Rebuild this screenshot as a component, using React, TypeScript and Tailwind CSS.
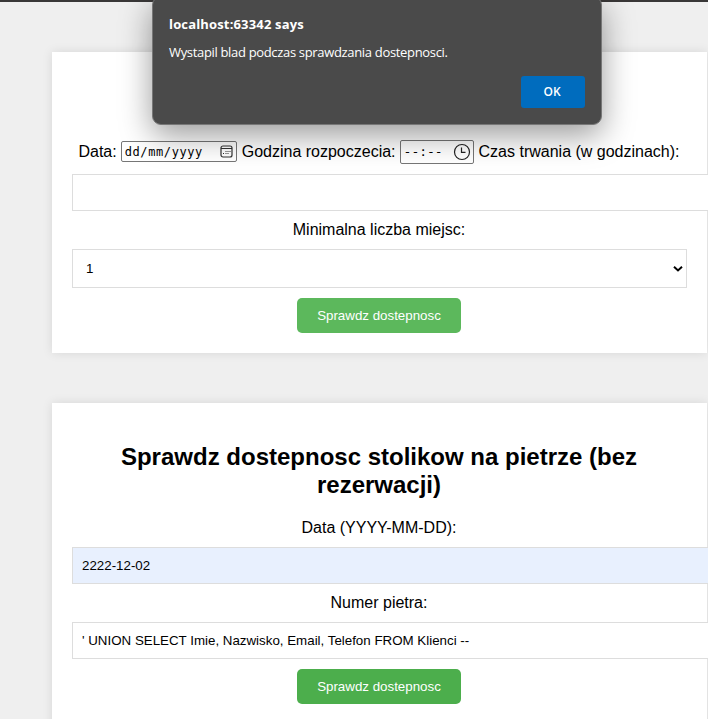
import React from "react";

function Panel({ className = "", children }: { className?: string; children: React.ReactNode }) {
  return (
    <section
      className={`flex w-[655px] shrink-0 flex-col items-center bg-white px-5 shadow-[0_0_10px_rgba(0,0,0,0.1)] ${className}`}
    >
      {children}
    </section>
  );
}

function Label({ children }: { children: React.ReactNode }) {
  return <label className="mr-px flex h-[38px] items-center text-[16px] leading-[18px]">{children}</label>;
}

function Field({ value, filled = false }: { value: string; filled?: boolean }) {
  return (
    <div
      className={`flex h-[37px] w-[637px] shrink-0 items-center self-start whitespace-pre border border-[#dddddd] px-[9px] text-[13.333px] leading-[15px] ${filled ? "bg-[#e8f0fe]" : "bg-white"}`}
    >
      {value}
    </div>
  );
}

function CheckButton({ className }: { className: string }) {
  return (
    <button
      className={`mr-px mt-[10px] h-[35px] w-[164px] rounded-[5px] text-[13.333px] leading-[15px] text-white ${className}`}
    >
      Sprawdz dostepnosc
    </button>
  );
}

function CalendarIcon() {
  return (
    <svg width="13" height="13" viewBox="0 0 13 13" fill="none" stroke="#333">
      <rect x="1" y="1" width="11" height="11" rx="2" strokeWidth="1.2" />
      <path d="M1 3.5h11" />
      <path d="M5.5 6.5h1M7.5 6.5h1M9.5 6.5h1M3 8.5h1M5.5 8.5h1M7.5 8.5h1" />
    </svg>
  );
}

function ClockIcon() {
  return (
    <svg width="18" height="18" viewBox="0 0 18 18" fill="none" stroke="#222" strokeWidth="1.2">
      <circle cx="9" cy="9" r="7.5" />
      <path d="M8.5 4.5v4.9h4" />
    </svg>
  );
}

function AlertDialog() {
  return (
    <div
      role="alertdialog"
      className="absolute left-[152px] top-[-4px] flex h-[129px] w-[450px] flex-col rounded-[9px] border border-[#777777] bg-[#4a4a4a] px-4 text-white shadow-[0_10px_32px_rgba(0,0,0,0.4)]"
      style={{ fontFamily: '"Open Sans", "Noto Sans", sans-serif' }}
    >
      <h1 className="mt-[18px] text-[13px] font-bold leading-[18px] tracking-[0.16px]">localhost:63342 says</h1>
      <p className="mt-[10px] text-[13px] leading-[18px] tracking-[-0.33px]">
        Wystapil blad podczas sprawdzania dostepnosci.
      </p>
      <button className="mt-[15px] h-8 w-16 self-end rounded-[3px] bg-[#006cbe] pr-[2px] text-[12px] font-semibold leading-[16px]">
        OK
      </button>
    </div>
  );
}

export default function App() {
  return (
    <main
      className="relative flex h-[719px] w-[708px] flex-col overflow-hidden bg-[#efefef] text-black"
      style={{ fontFamily: '"Liberation Sans", Arial, sans-serif' }}
    >
      <div className="h-[2px] shrink-0 bg-[#393737]" />
      <div className="flex flex-col gap-[50px] pl-[52px] pt-[50px]">
        <Panel className="h-[301px]">
          <div className="mr-px mt-[87px] flex h-[25px] items-center whitespace-nowrap text-[16px] leading-[18px]">
            <span>Data:</span>
            <span
              className="ml-[4px] flex h-[21px] w-[116px] items-center justify-between rounded-[2px] border border-[#767676] bg-white pl-[3px] pr-[3px] text-[12px] leading-[15px]"
              style={{ fontFamily: '"DejaVu Sans Mono", monospace' }}
            >
              <span className="pt-px tracking-[0.6px]">dd/mm/yyyy</span>
              <CalendarIcon />
            </span>
            <span className="ml-[5px]">Godzina rozpoczecia:</span>
            <span
              className="ml-[4px] flex h-[24px] w-[74px] items-center justify-between rounded-[2px] border border-[#767676] bg-white pl-[3px] pr-[2px] text-[13px] leading-[15px]"
              style={{ fontFamily: '"DejaVu Sans Mono", monospace' }}
            >
              --:--
              <ClockIcon />
            </span>
            <span className="ml-[5px]">Czas trwania (w godzinach):</span>
          </div>
          <div className="h-[10px] shrink-0" />
          <Field value="" />
          <Label>Minimalna liczba miejsc:</Label>
          <div className="flex h-[39px] w-[615px] shrink-0 items-center justify-between border border-[#dddddd] bg-white pl-[13px] pr-[3px] text-[13.333px]">
            <span>1</span>
            <svg width="10" height="8" viewBox="0 0 10 8" fill="none" stroke="#000" strokeWidth="2">
              <path d="M1 1.8l4 3.7 4-3.7" />
            </svg>
          </div>
          <CheckButton className="bg-[#5cb85c]" />
        </Panel>

        <Panel className="h-[400px]">
          <h2 className="mr-px mt-[40px] text-center text-[24px] font-bold leading-[28px]">
            Sprawdz dostepnosc stolikow na pietrze (bez rezerwacji)
          </h2>
          <div className="h-[10px] shrink-0" />
          <Label>Data (YYYY-MM-DD):</Label>
          <Field value="2222-12-02" filled />
          <Label>Numer pietra:</Label>
          <Field value="' UNION SELECT Imie, Nazwisko, Email, Telefon FROM Klienci --" />
          <CheckButton className="bg-[#4cae4c]" />
        </Panel>
      </div>
      <AlertDialog />
    </main>
  );
}
